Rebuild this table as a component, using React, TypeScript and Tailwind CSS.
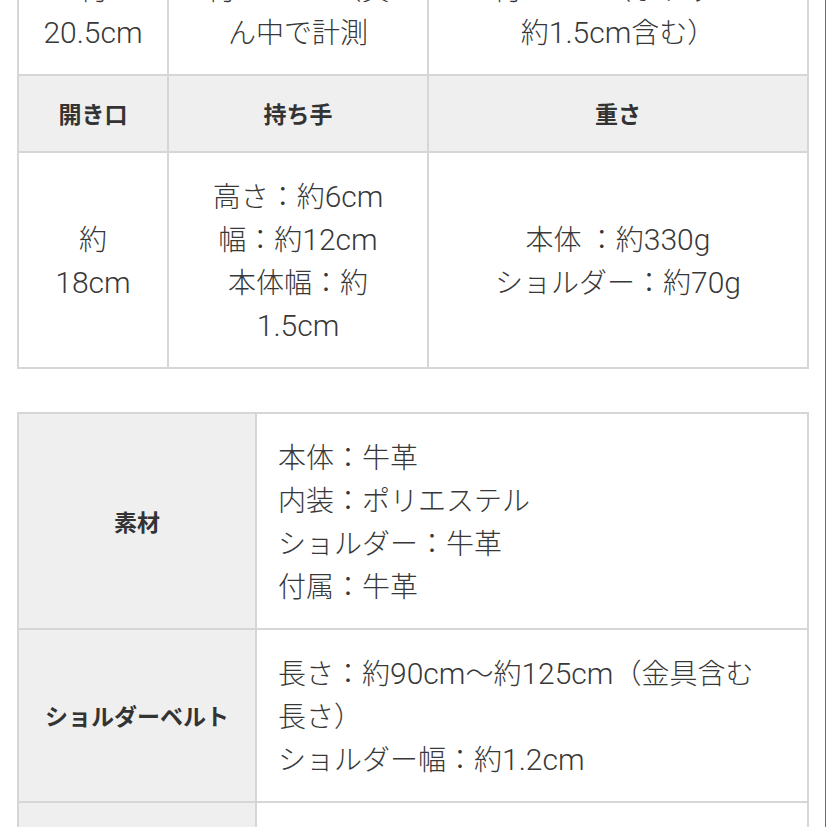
const font = {
  fontFamily: '"Hiragino Sans", "Noto Sans CJK JP", "Noto Sans", sans-serif',
};

type Cell = string[];

const sizeRows: { head: string[]; body: Cell[] }[] = [
  {
    head: [],
    body: [
      ["約", "20.5cm"],
      ["約13.5cm（真", "ん中で計測"],
      ["約7.5cm（ポケット", "約1.5cm含む）"],
    ],
  },
  {
    head: ["開き口", "持ち手", "重さ"],
    body: [
      ["約", "18cm"],
      ["高さ：約6cm", "幅：約12cm", "本体幅：約", "1.5cm"],
      ["本体 ：約330g", "ショルダー：約70g"],
    ],
  },
];

const specRows: { label: string; lines: string[] }[] = [
  {
    label: "素材",
    lines: ["本体：牛革", "内装：ポリエステル", "ショルダー：牛革", "付属：牛革"],
  },
  {
    label: "ショルダーベルト",
    lines: ["長さ：約90cm〜約125cm（金具含む", "長さ）", "ショルダー幅：約1.2cm"],
  },
  {
    label: "付属品",
    lines: ["保存袋"],
  },
];

// latin runs are drawn a bit wider, like the phone font in the screenshot
const Line = ({ text }: { text: string }) => {
  const parts = text.split(/([0-9A-Za-z.]+)/).filter(Boolean);
  return (
    <div className="whitespace-pre leading-[43px]">
      {parts.map((p, i) =>
        /^[0-9A-Za-z.]+$/.test(p) ? (
          <span
            key={i}
            className="text-[30px] font-light leading-none"
            style={{ fontFamily: 'Roboto, "Noto Sans", sans-serif' }}
          >
            {p}
          </span>
        ) : (
          <span key={i} className="leading-none">
            {p}
          </span>
        )
      )}
    </div>
  );
};

const Lines = ({ lines }: { lines: string[] }) => (
  <>
    {lines.map((l, i) => (
      <Line key={i} text={l} />
    ))}
  </>
);

export default function App() {
  return (
    <div
      className="w-[826px] h-[827px] overflow-hidden bg-white border-r border-[#6f6f6f] text-[#383838]"
      style={font}
    >
      <div className="pl-[17px] -mt-[56px]">
        <table className="w-[792px] table-fixed border-collapse">
          <colgroup>
            <col className="w-[150px]" />
            <col className="w-[260px]" />
            <col />
          </colgroup>
          <tbody>
            {sizeRows.map((row, r) => (
              <>
                {row.head.length > 0 && (
                  <tr key={`h${r}`} className="bg-[#efefef]">
                    {row.head.map((h) => (
                      <th
                        key={h}
                        className="border-2 border-[#d6d6d6] py-[21px] text-[23px] leading-[33px] font-bold text-[#333]"
                      >
                        {h}
                      </th>
                    ))}
                  </tr>
                )}
                <tr key={`b${r}`}>
                  {row.body.map((c, i) => (
                    <td
                      key={i}
                      className="border-2 border-[#d6d6d6] py-[21px] text-center align-middle text-[28px] leading-[43px] font-light"
                    >
                      <Lines lines={c} />
                    </td>
                  ))}
                </tr>
              </>
            ))}
          </tbody>
        </table>

        <table className="mt-[43px] w-[792px] table-fixed border-collapse">
          <colgroup>
            <col className="w-[238px]" />
            <col />
          </colgroup>
          <tbody>
            {specRows.map((row) => (
              <tr key={row.label}>
                <th className="border-2 border-[#d6d6d6] bg-[#efefef] text-[23px] font-bold text-[#333] align-middle">
                  {row.label}
                </th>
                <td className="border-2 border-[#d6d6d6] py-[21px] pl-[21px] pr-[10px] text-left text-[28px] leading-[43px] font-light">
                  <Lines lines={row.lines} />
                </td>
              </tr>
            ))}
          </tbody>
        </table>
      </div>
    </div>
  );
}
